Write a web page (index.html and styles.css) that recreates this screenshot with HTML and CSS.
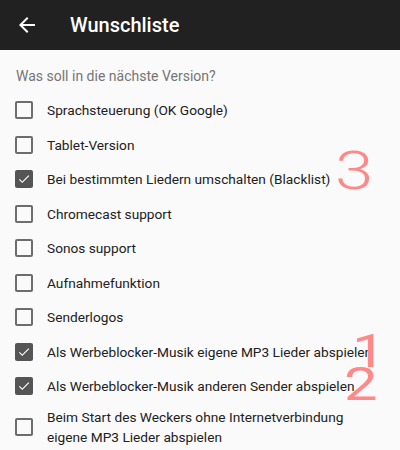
FILE: index.html
```html
<!DOCTYPE html>
<html>
<head>
<meta charset="utf-8">
<link rel="stylesheet" href="styles.css">
</head>
<body>
<div class="appbar">
  <svg class="back" viewBox="0 0 24 24" width="24" height="24"><path fill="#fff" d="M20 11H7.83l5.59-5.59L12 4l-8 8 8 8 1.41-1.41L7.83 13H20v-2z"/></svg>
  <div class="title">Wunschliste</div>
</div>
<div class="content">
  <div class="subheader">Was soll in die nächste Version?</div>
  <ul class="list">
    <li class="row"><span class="box"></span><span class="label">Sprachsteuerung (OK Google)</span></li>
    <li class="row"><span class="box"></span><span class="label">Tablet-Version</span></li>
    <li class="row"><span class="box checked"><svg viewBox="0 0 24 24"><path fill="#fff" d="M9 16.17L4.83 12l-1.42 1.41L9 19 21 7l-1.41-1.41z"/></svg></span><span class="label">Bei bestimmten Liedern umschalten (Blacklist)</span></li>
    <li class="row"><span class="box"></span><span class="label">Chromecast support</span></li>
    <li class="row"><span class="box"></span><span class="label">Sonos support</span></li>
    <li class="row"><span class="box"></span><span class="label">Aufnahmefunktion</span></li>
    <li class="row"><span class="box"></span><span class="label">Senderlogos</span></li>
    <li class="row"><span class="box checked"><svg viewBox="0 0 24 24"><path fill="#fff" d="M9 16.17L4.83 12l-1.42 1.41L9 19 21 7l-1.41-1.41z"/></svg></span><span class="label">Als Werbeblocker-Musik eigene MP3 Lieder abspielen</span></li>
    <li class="row"><span class="box checked"><svg viewBox="0 0 24 24"><path fill="#fff" d="M9 16.17L4.83 12l-1.42 1.41L9 19 21 7l-1.41-1.41z"/></svg></span><span class="label">Als Werbeblocker-Musik anderen Sender abspielen</span></li>
    <li class="row tall"><span class="box"></span><span class="label">Beim Start des Weckers ohne Internetverbindung<br>eigene MP3 Lieder abspielen</span></li>
  </ul>
</div>
<div class="mark m3">3</div>
<div class="mark m1">1</div>
<div class="mark m2">2</div>
</body>
</html>
```
FILE: styles.css
```css
html, body {
  margin: 0;
  padding: 0;
  background: #fafafa;
  font-family: Roboto, "Noto Sans", sans-serif;
  overflow: hidden;
}
.appbar {
  height: 50px;
  background: #212121;
  display: flex;
  align-items: center;
  box-sizing: border-box;
  padding-left: 15px;
}
.back {
  display: block;
  width: 24px;
  height: 24px;
}
.title {
  margin-left: 31px;
  color: #fff;
  font-size: 20px;
  font-weight: 500;
  margin-top: -1px;
}
.subheader {
  padding-left: 16px;
  height: 43px;
  box-sizing: border-box;
  padding-top: 17px;
  font-size: 14px;
  color: #757575;
  line-height: 18px;
}
.list {
  list-style: none;
  margin: 0;
  padding: 0;
}
.row {
  height: 34.5px;
  display: flex;
  align-items: center;
  padding-left: 15px;
}
.row.tall {
  height: 47.5px;
}
.box {
  width: 18px;
  height: 18px;
  box-sizing: border-box;
  border: 2px solid #6d6d6d;
  border-radius: 2px;
  flex: none;
  display: flex;
  align-items: center;
  justify-content: center;
}
.box.checked {
  background: #555555;
  border-color: #555555;
}
.box svg {
  width: 16px;
  height: 16px;
  display: block;
}
.label {
  margin-left: 14px;
  font-size: 13.7px;
  color: #212121;
  line-height: 20.5px;
}
.mark {
  position: absolute;
  color: #ff8888;
  font-weight: 400;
  line-height: 1;
  transform: scaleX(1.3);
  transform-origin: left top;
}
.m3 {
  left: 335px;
  top: 145px;
  font-size: 53px;
  font-weight: 300;
}
.m1 {
  left: 352px;
  top: 328px;
  font-size: 46px;
}
.m2 {
  left: 344px;
  top: 361px;
  font-size: 46px;
}
```
